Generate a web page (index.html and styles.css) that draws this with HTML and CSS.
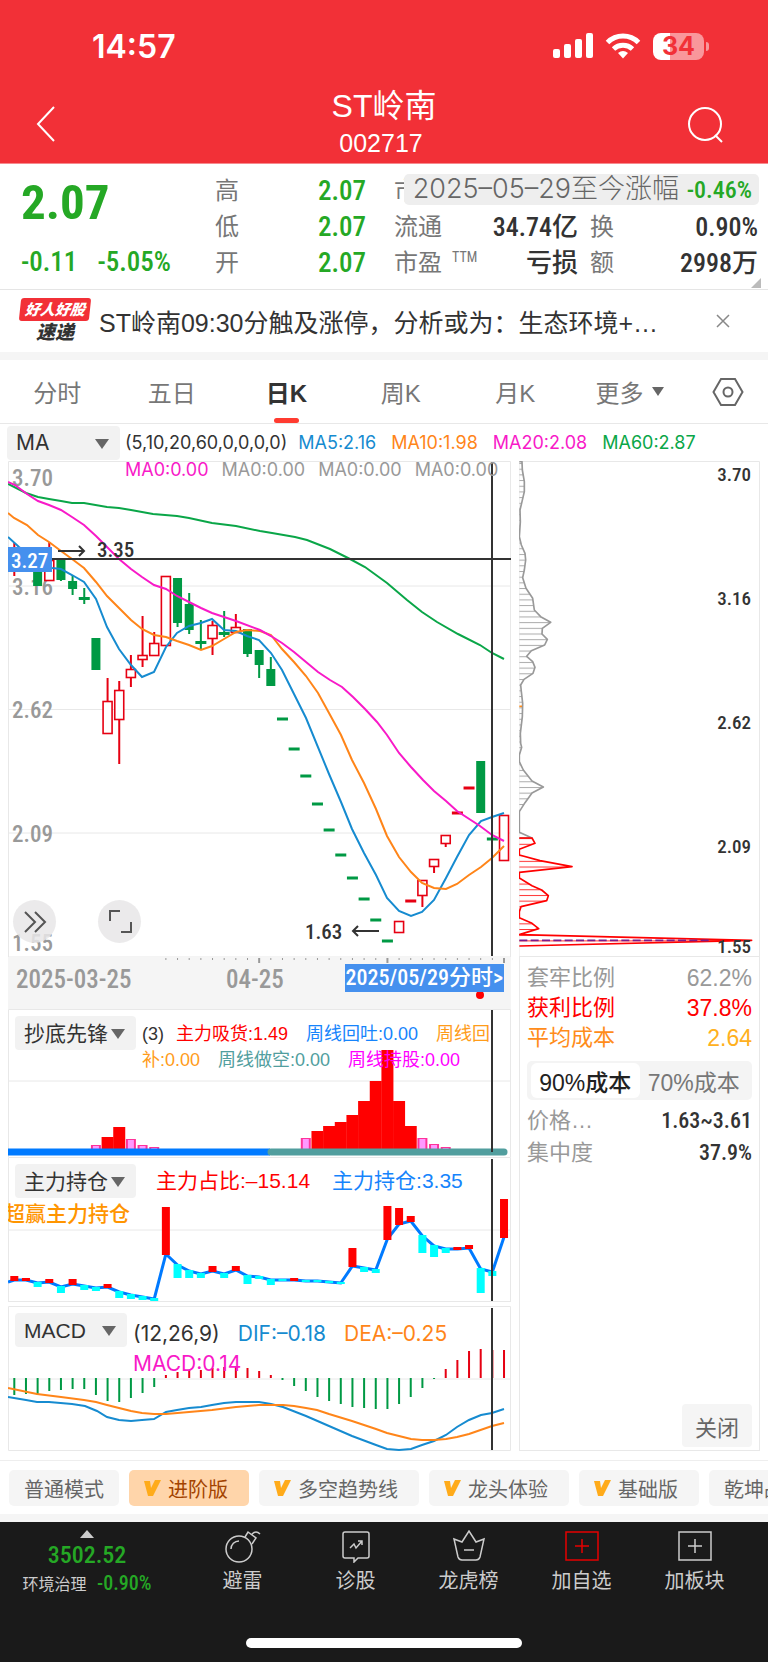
FILE: index.html
```html
<!DOCTYPE html>
<html lang="zh-CN">
<head>
	<meta charset="UTF-8">
	<meta name="viewport" content="width=device-width, initial-scale=1">
	<title>ST岭南 002717</title>
	<link rel="stylesheet" href="styles.css">
</head>
<body>

<header class="top">
	<div class="statusbar">
		<span class="clock">14:57</span>
		<div class="status-icons">
			<svg width="40" height="26" viewBox="0 0 40 26" fill="#fff"><rect x="0" y="16" width="7" height="9" rx="2"/><rect x="11" y="11" width="7" height="14" rx="2"/><rect x="22" y="6" width="7" height="19" rx="2"/><rect x="33" y="0" width="7" height="25" rx="2"/></svg>
			<svg width="36" height="26" viewBox="0 0 36 26" fill="none" stroke="#fff" stroke-width="5"><path d="M2.500 9.500a22 22 0 0 1 31 0M8.500 16a14 14 0 0 1 19 0"/><path d="M18 25.500l-5-5.500q5-4 10 0z" fill="#fff" stroke="none"/></svg>
			<div class="battery"><span>34</span></div>
		</div>
	</div>
	<div class="titlebar">
		<button class="icon-btn" aria-label="返回"><svg width="20" height="36" viewBox="0 0 20 36" fill="none" stroke="#fff" stroke-width="2"><path d="M18 1L2 18l16 17"/></svg></button>
		<div class="title">
			<h1>ST岭南</h1>
			<p>002717</p>
		</div>
		<button class="icon-btn" aria-label="搜索"><svg width="37" height="37" viewBox="0 0 37 37" fill="none" stroke="#fff" stroke-width="2"><circle cx="18" cy="18" r="16"/><path d="M28 29l7 7"/></svg></button>
	</div>
</header>

<section class="quote">
	<div class="price">
		<strong>2.07</strong>
		<p><span>-0.11</span><span>-5.05%</span></p>
	</div>
	<dl class="c1">
		<div><dt>高</dt><dd class="down">2.07</dd></div>
		<div><dt>低</dt><dd class="down">2.07</dd></div>
		<div><dt>开</dt><dd class="down">2.07</dd></div>
	</dl>
	<dl class="c2">
		<div><dt>市值</dt><dd></dd></div>
		<div><dt>流通</dt><dd>34.74亿</dd></div>
		<div><dt>市盈<sup>TTM</sup></dt><dd>亏损</dd></div>
	</dl>
	<dl class="c3">
		<div><dt></dt><dd></dd></div>
		<div><dt>换</dt><dd>0.90%</dd></div>
		<div><dt>额</dt><dd>2998万</dd></div>
	</dl>
	<div class="range-tip">2025–05–29至今涨幅 <b>-0.46%</b></div>
</section>

<section class="news">
	<div class="news-logo"><b>好人好股</b><i>速递</i></div>
	<a href="#">ST岭南09:30分触及涨停，分析或为：生态环境+…</a>
	<button class="icon-btn" aria-label="关闭"><svg width="14" height="14" viewBox="0 0 14 14" stroke="#888" stroke-width="1.500"><path d="M1 1l12 12M13 1L1 13"/></svg></button>
</section>

<nav class="tabs">
	<button>分时</button>
	<button>五日</button>
	<button class="active">日K</button>
	<button>周K</button>
	<button>月K</button>
	<button>更多<i class="tri"></i></button>
	<button aria-label="设置"><svg width="32" height="30" viewBox="0 0 32 30" fill="none" stroke="#666" stroke-width="2"><path d="M9 2h14l7.500 13L23 28H9L1.500 15z"/><circle cx="16" cy="15" r="4.500"/></svg></button>
</nav>

<div class="ma-row">
	<div class="picker wide"><select aria-label="主图指标"><option>MA</option></select></div>
	<p>(5,10,20,60,0,0,0,0)</p>
	<p class="blue">MA5:2.16</p>
	<p class="orange">MA10:1.98</p>
	<p class="pink">MA20:2.08</p>
	<p class="green">MA60:2.87</p>
</div>

<main class="board">
	<div class="left">

		<div class="panel">
			<svg viewBox="8 461 503 496" id="kline">
				<path class="frame" d="M8.500 957V461.500H510.500V957M8 586h503M8 709.500h503M8 833h503M8 957h503"/>
				<g class="axis-num">
					<text x="12" y="486">3.70</text>
					<text x="12" y="595">3.16</text>
					<text x="12" y="718">2.62</text>
					<text x="12" y="842">2.09</text>
					<text x="12" y="951">1.55</text>
				</g>
				<g id="candles"></g>
				<g class="line">
					<polyline class="s-green" points="8,484 26,493 38,497 49,499 61,501 72,503 84,503 107,507 119,508 131,510 153,514 177,516 189,518 212,523 236,526 260,531 272,533 295,537 307,540 330,549 350,559 365,567 387,583 407,600 422,612 437,622 458,634 480,645 492,653 504,659"/>
					<polyline class="s-blue" points="8,537 19,547 35,560 52,568 61,569 72,575 84,582 96,599 107,627 119,649 131,665 142,677 154,672 166,647 177,633 189,626 201,623 212,619 224,630 236,631 247,636 259,640 271,653 282,670 294,694 306,718 329,774 341,802 352,829 364,853 376,875 387,898 399,911 411,916 422,912 434,900 446,878 457,857 469,835 481,821 492,817 504,813"/>
					<polyline class="s-orange" points="8,513 14,518 27,525 38,535 49,542 61,551 72,559 84,568 96,582 107,596 119,608 131,620 142,629 154,635 166,637 177,641 189,645 201,650 212,646 224,639 236,632 247,630 260,631 271,635 282,649 294,662 306,676 318,693 329,713 341,735 352,760 364,783 376,809 387,836 399,857 411,872 422,883 434,888 446,889 457,884 469,875 481,867 492,858 504,846"/>
					<polyline class="s-pink" points="8,482 15,485 27,494 38,501 49,505 61,510 72,517 84,525 96,536 107,547 119,559 131,569 142,577 154,585 166,589 177,596 189,602 201,608 212,613 224,617 236,621 260,630 271,636 282,643 294,652 306,662 318,672 330,680 342,687 353,697 365,709 377,722 387,735 399,753 411,767 423,780 434,791 446,801 457,811 480,826 492,835 504,841"/>
				</g>
				<path class="cross" d="M8 559h503M492 462v494"/>
				<path class="arrow" d="M58 551h26m-5-5l5 5-5 5M379 931h-26m5-5l-5 5 5 5"/>
				<g class="mark">
					<text x="97" y="557">3.35</text>
					<text x="305" y="939">1.63</text>
				</g>
				<rect x="8" y="547" width="44" height="25" fill="#4590ee"/>
				<text class="tag-num" x="11" y="568">3.27</text>
			</svg>
			<div class="ma-zero"><span class="pink">MA0:0.00</span><span>MA0:0.00</span><span>MA0:0.00</span><span>MA0:0.00</span></div>
			<div class="tools">
				<button aria-label="展开"><svg width="24" height="24" viewBox="0 0 24 24" fill="none" stroke="#555" stroke-width="2"><path d="M2 2l10 10L2 22M12 2l10 10-10 10"/></svg></button>
				<button aria-label="全屏"><svg width="24" height="24" viewBox="0 0 24 24" fill="none" stroke="#555" stroke-width="2"><path d="M2 11V1h10M13 22h10V12"/></svg></button>
			</div>
		</div>

		<div class="panel dates">
			<svg viewBox="8 957 503 52">
				<g id="ticks" stroke="#999" stroke-width="1"></g>
				<g class="axis-num date-num">
					<text x="16" y="988">2025-03-25</text>
					<text x="226" y="988">04-25</text>
				</g>
				<circle cx="480" cy="995" r="4" fill="red"/>
			</svg>
			<button class="date-tag">2025/05/29分时&gt;</button>
		</div>

		<div class="panel">
			<svg viewBox="8 1009 503 148">
				<path class="frame" d="M8.500 1157V1009.500H510.500V1157M8 1081h503"/>
				<g id="absorb"></g>
				<path d="M8 1152h262" stroke="#007aff" stroke-width="7"/>
				<path d="M271 1152h233" stroke="#519e9e" stroke-width="7" stroke-linecap="round"/>
				<path class="cross" d="M492 1010v142"/>
			</svg>
			<div class="legend">
				<div class="picker"><select aria-label="副图指标一"><option>抄底先锋</option></select></div>
				<p class="small"><span class="arg">(3)</span><span class="red">主力吸货:1.49</span><span class="azure">周线回吐:0.00</span><span class="amber">周线回补:0.00</span><span class="teal">周线做空:0.00</span><span class="fuchsia">周线持股:0.00</span></p>
			</div>
		</div>

		<div class="panel">
			<svg viewBox="8 1157 503 149">
				<path class="frame" d="M8.500 1302V1157.500H510.500V1302M8 1230h503M8 1301.500h503"/>
				<polyline id="holdline" fill="none" stroke="#007aff" stroke-width="3"/>
				<g id="hold"></g>
				<path class="cross" d="M492 1159v142"/>
			</svg>
			<div class="legend">
				<div class="picker"><select aria-label="副图指标二"><option>主力持仓</option></select></div>
				<p class="gap"><span class="red">主力占比:–15.14</span><span class="azure">主力持仓:3.35</span></p>
			</div>
			<p class="watermark">超赢主力持仓</p>
		</div>

		<div class="panel">
			<svg viewBox="8 1306 503 145">
				<path class="frame" d="M8.500 1450.500V1306.500H510.500V1450.500zM8 1379h503"/>
				<g id="macd"></g>
				<g class="line">
					<polyline class="s-blue" points="8,1397 26,1400 37,1402 49,1402 72,1404 85,1406 97,1411 107,1417 119,1420 131,1421 142,1420 154,1419 166,1412 177,1410 189,1408 201,1407 212,1405 224,1403 236,1402 247,1402 259,1402 271,1404 283,1407 306,1416 329,1426 352,1436 376,1445 387,1449 399,1450 411,1449 422,1445 434,1441 446,1435 457,1427 469,1420 481,1415 492,1413 504,1409"/>
					<polyline class="s-orange" points="8,1388 37,1394 61,1397 84,1400 96,1402 107,1405 119,1408 131,1411 142,1413 154,1414 166,1414 189,1412 212,1410 236,1407 259,1405 283,1405 294,1406 306,1408 317,1410 329,1414 352,1421 376,1429 387,1433 399,1436 411,1439 422,1440 434,1440 446,1439 457,1437 469,1434 492,1426 504,1423"/>
				</g>
				<path class="cross" d="M492 1308v142"/>
			</svg>
			<div class="legend">
				<div class="picker short"><select aria-label="副图指标三"><option>MACD</option></select></div>
				<p class="macd"><span>(12,26,9)</span><span class="blue">DIF:–0.18</span><span class="orange">DEA:–0.25</span><span class="pink">MACD:0.14</span></p>
			</div>
		</div>
	</div>

	<div class="right">
		<svg viewBox="519 461 241 496">
			<defs>
				<!-- one stripe per price step -->
				<pattern id="stripeG" width="20" height="17.050" y="7" patternUnits="userSpaceOnUse"><rect width="20" height="3" fill="#aaa"/></pattern>
				<pattern id="stripeR" width="20" height="17.050" y="7" patternUnits="userSpaceOnUse"><rect width="20" height="3" fill="#ff3030"/></pattern>
			</defs>
			<path class="frame" d="M519.500 461.500H759.500V957M519 461v496M519 956.500h241"/>
			<g transform="translate(510 455) scale(.333333)" stroke-width="5" stroke-linejoin="round">
				<path fill="url(#stripeG)" stroke="#999" d="M28 20H36L37 45 43 80 43 110 36 140 30 165 31 200 28 245 34 270 45 295 47 315 43 345 38 368 48 400 68 430 73 465 92 485 122 502 97 520 96 537 112 553 104 570 64 587 50 604 68 620 75 637 69 655 42 673 32 690 34 710 38 745 37 785 31 835 32 865 35 877 28 900 28 920 40 945 66 978 100 996 66 1014 45 1043 28 1070V1132L66 1149H28"/>
				<path fill="url(#stripeR)" stroke="red" d="M28 1149H66L75 1165 28 1183V1200L90 1217 186 1235 28 1252V1269L66 1292 95 1305 115 1322 110 1337 33 1355 28 1370V1388L66 1405 86 1421 28 1439 725 1456 28 1473"/>
				<path stroke="#7b1b8c" stroke-dasharray="24 10" d="M28 1456H600"/>
				<path stroke="#ff8c1a" d="M28 754h8"/>
			</g>
			<g class="side-num">
				<text x="751" y="481">3.70</text>
				<text x="751" y="605">3.16</text>
				<text x="751" y="729">2.62</text>
				<text x="751" y="853">2.09</text>
				<text x="751" y="953">1.55</text>
			</g>
		</svg>
		<div class="info">
			<p class="gray">套牢比例<span>62.2%</span></p>
			<p class="red">获利比例<span>37.8%</span></p>
			<p class="cost">平均成本<span>2.64</span></p>
			<div class="seg">
				<button class="active">90%成本</button><button>70%成本</button>
			</div>
			<p class="gray">价格…<b>1.63~3.61</b></p>
			<p class="gray">集中度<b>37.9%</b></p>
			<button class="close">关闭</button>
		</div>
	</div>
</main>

<nav class="modes">
	<button>普通模式</button>
	<button class="v active"><svg class="vip" viewBox="0 0 18 16"><path d="M0 1h6l1 7 4-8h6L9 16H4z"/></svg>进阶版</button>
	<button class="v"><svg class="vip" viewBox="0 0 18 16"><path d="M0 1h6l1 7 4-8h6L9 16H4z"/></svg>多空趋势线</button>
	<button class="v"><svg class="vip" viewBox="0 0 18 16"><path d="M0 1h6l1 7 4-8h6L9 16H4z"/></svg>龙头体验</button>
	<button class="v"><svg class="vip" viewBox="0 0 18 16"><path d="M0 1h6l1 7 4-8h6L9 16H4z"/></svg>基础版</button>
	<button>乾坤战法</button>
</nav>

<footer class="bottom">
	<div class="actions">
		<a href="#" class="index">
			<i class="up"></i>
			<strong>3502.52</strong>
			<span>环境治理 <b>-0.90%</b></span>
		</a>
		<a href="#"><svg width="36" height="33" viewBox="0 0 36 33"><circle cx="14" cy="19" r="13"/><path d="M6 19a8 8 0 0 1 8-8M20 7l3-5 8 6-4 6M27 4q4-4 8 0"/></svg>避雷</a>
		<a href="#"><svg width="36" height="33" viewBox="0 0 36 33"><path d="M7 2h22q2 0 2 2v22q0 2-2 2h-9l-4 4v-4H7q-2 0-2-2V4q0-2 2-2zM12 18l4-4 2 4 6-7M20 11h4v4"/></svg>诊股</a>
		<a href="#"><svg width="36" height="33" viewBox="0 0 36 33"><path d="M3 9l8 3 7-11 7 11 8-3-4 18q-1 3-4 3H11q-3 0-4-3zM13 20h10"/></svg>龙虎榜</a>
		<a href="#"><svg class="hot" width="36" height="33" viewBox="0 0 36 33"><path d="M2 2h32v28H2zM18 9v14M11 16h14"/></svg>加自选</a>
		<a href="#"><svg width="36" height="33" viewBox="0 0 36 33"><path d="M2 2h32v28H2zM18 9v14M11 16h14"/></svg>加板块</a>
	</div>
	<div class="home"></div>
</footer>

<script src="charts.js"></script>
</body>
</html>
```

FILE: styles.css
```css
* {
	box-sizing: border-box;
}

body, h1, p, dl, dd {
	margin: 0;
}

body {
	background: #fff;
	color: #333;
	font-family: "Liberation Sans", "Noto Sans CJK SC", sans-serif;
	font-size: 24px;
	overflow-x: hidden;
}

button, select {
	font: inherit;
	color: inherit;
	border: 0;
	padding: 0;
	background: none;
}

a {
	color: inherit;
	text-decoration: none;
}

svg {
	display: block;
}

/* colours */

.blue { color: #168bd0; }
.orange { color: #ff8519; }
.pink { color: #f81ac8; }
.green { color: #0aa648; }
.red { color: #f00; }
.azure { color: #1684fc; }
.amber { color: #ff9c1a; }
.teal { color: #519e9e; }
.fuchsia { color: #f0f; }
.gray { color: #999; }

/* header */

.top {
	height: 164px;
	background: #f23037;
	border-bottom: 1px solid #f78a8e;
	color: #fff;
}

.statusbar {
	display: flex;
	justify-content: space-between;
	align-items: center;
	height: 87px;
	padding: 5px 59px 0 92px;
}

.clock {
	font: 600 32px Inter, sans-serif;
}

.status-icons {
	display: flex;
	align-items: center;
	gap: 12px;
}

.battery {
	position: relative;
	width: 51px;
	height: 27px;
	margin-right: 5px;
	border-radius: 8px;
	background: linear-gradient(90deg, #fff 34%, #f9979b 34%);
	color: #f23037;
	font: 700 25px/27px Inter, sans-serif;
	text-align: center;
}

.battery::after {
	content: "";
	position: absolute;
	right: -5px;
	top: 9px;
	width: 3px;
	height: 9px;
	border-radius: 0 4px 4px 0;
	background: #f9979b;
}

.titlebar {
	display: grid;
	grid-template-columns: 1fr auto 1fr;
	align-items: center;
	padding: 0 44px 0 36px;
}

.icon-btn {
	display: flex;
}

.title + .icon-btn {
	justify-self: end;
}

.title {
	padding-left: 8px;
	text-align: center;
}

.title h1 {
	font-size: 32px;
	font-weight: 400;
	line-height: 38px;
}

.title p {
	padding-right: 6px;
	font-size: 25px;
	line-height: 36px;
}

/* quote */

.quote {
	position: relative;
	display: flex;
	height: 126px;
	padding: 9px 10px 0 21px;
	border-bottom: 1px solid #e5e5e5;
	font-family: "Roboto Condensed", Roboto, "Noto Sans CJK SC", sans-serif;
}

.quote::after {
	content: "";
	position: absolute;
	right: 7px;
	bottom: 1px;
	border: 5px solid;
	border-color: transparent #bbb #bbb transparent;
}

.price {
	width: 194px;
	color: #25a825;
	font-weight: 500;
}

.price strong {
	display: block;
	font-size: 49px;
	font-weight: 700;
	line-height: 60px;
}

.price p {
	display: flex;
	gap: 20px;
	padding-top: 11px;
	font-size: 27px;
	line-height: 36px;
}

.quote dl > div {
	display: flex;
	justify-content: space-between;
	height: 36px;
	line-height: 36px;
}

.quote dt {
	color: #777;
	font-size: 24px;
}

.quote dd {
	font-weight: 500;
	font-size: 26px;
	white-space: nowrap;
}

.quote dd.down {
	color: #25a825;
	font-size: 27px;
}

.quote sup {
	margin-left: 10px;
	font-size: 14px;
	line-height: 1;
}

.c1 {
	width: 151px;
	margin-right: 28px;
}

.c2 {
	width: 184px;
	margin-right: 12px;
}

.c3 {
	flex: 1;
}

.range-tip {
	position: absolute;
	right: 9px;
	top: 10px;
	padding: 0 7px 0 9px;
	border-radius: 5px;
	background: #eee;
	color: #666;
	font: 300 27px/30px Inter, "Noto Sans CJK SC", sans-serif;
	white-space: nowrap;
}

.range-tip b {
	color: #25a825;
	font: 500 24px/30px "Roboto Condensed", Roboto, sans-serif;
}

/* news */

.news {
	display: flex;
	align-items: center;
	height: 70px;
	padding: 0 38px 0 20px;
	border-bottom: 8px solid #f5f5f5;
}

.news a {
	flex: 1;
	margin-left: 9px;
	font-size: 25px;
	white-space: nowrap;
}

.news-logo {
	width: 70px;
	font-style: italic;
	font-weight: 900;
	text-align: center;
}

.news-logo b {
	display: block;
	border-radius: 3px;
	background: #f23037;
	color: #fff;
	font-size: 15px;
	line-height: 23px;
	transform: skewX(-6deg);
}

.news-logo i {
	display: block;
	font-size: 19px;
	line-height: 24px;
}

/* tabs */

.tabs {
	display: grid;
	grid-template-columns: repeat(6, 17fr) 12fr;
	height: 64px;
	border-bottom: 1px solid #e8e8e8;
}

.tabs button {
	position: relative;
	display: flex;
	align-items: center;
	justify-content: center;
	color: #777;
}

.tabs .active {
	color: #333;
	font-weight: 700;
}

.tabs .active::after {
	content: "";
	position: absolute;
	bottom: 0;
	width: 25px;
	height: 5px;
	border-radius: 3px;
	background: #ff3b30;
}

.tri {
	margin-left: 9px;
	border: 6px solid transparent;
	border-top: 9px solid #666;
	border-bottom: 0;
}

/* indicator drop-downs */

.picker {
	position: relative;
	flex: none;
	width: 121px;
	height: 34px;
	border-radius: 4px;
	background: #f2f2f2;
}

.picker select {
	width: 100%;
	height: 34px;
	padding-left: 9px;
	appearance: none;
	font-size: 21px;
	color: #333;
}

.picker::after {
	content: "";
	position: absolute;
	right: 11px;
	top: 13px;
	border: 7px solid transparent;
	border-top: 10px solid #666;
	border-bottom: 0;
	pointer-events: none;
}

.picker.wide {
	width: 113px;
	margin-right: 5px;
}

.picker.short {
	width: 112px;
}

.ma-row {
	display: flex;
	align-items: center;
	height: 37px;
	padding-left: 7px;
	font: 18px Inter, sans-serif;
}

.ma-row p + p {
	margin-left: 15px;
}

.ma-row p + .blue {
	margin-left: 11px;
}

/* charts */

.board {
	display: grid;
	grid-template-columns: 503fr 241fr;
	gap: 8px;
	padding: 0 8px;
}

.panel {
	display: grid;
	overflow: hidden;
}

.panel > * {
	grid-area: 1 / 1;
	width: 100%;
	min-width: 0;
}

.frame {
	fill: none;
	stroke: #e8e8e8;
}

.cross {
	fill: none;
	stroke: #333;
	stroke-width: 2;
}

.arrow {
	fill: none;
	stroke: #333;
	stroke-width: 2;
}

.line {
	fill: none;
	stroke-width: 2;
}

.s-blue { stroke: #168bd0; }
.s-orange { stroke: #ff8519; }
.s-pink { stroke: #f81ac8; }
.s-green { stroke: #0aa648; }

.panel text,
.side-num {
	font-family: "Roboto Condensed", Roboto, sans-serif;
	font-weight: 500;
}

.axis-num {
	fill: #999;
	font-size: 23px;
}

.date-num {
	font-size: 25px;
}

.mark {
	fill: #333;
	font-size: 21px;
}

.tag-num {
	fill: #fff;
	font-size: 21px;
}

.side-num {
	fill: #333;
	font-size: 19px;
	text-anchor: end;
}

.ma-zero {
	display: flex;
	gap: 13px;
	padding: 1px 0 0 117px;
	color: #999;
	font: 18px/16px Inter, sans-serif;
}

.tools {
	display: flex;
	align-items: end;
	gap: 42px;
	padding: 0 0 14px 5px;
}

.tools button {
	display: flex;
	align-items: center;
	justify-content: center;
	width: 43px;
	height: 43px;
	border-radius: 50%;
	background: rgba(232, 230, 232, .85);
}

.dates {
	background: #f5f5f5;
}

.panel > .date-tag {
	justify-self: end;
	width: auto;
	height: 28px;
	margin: 7px 7px 0 0;
	padding: 0 1px;
	background: #4590ee;
	color: #fff;
	font: 500 22px/28px "Roboto Condensed", Roboto, "Noto Sans CJK SC", sans-serif;
}

.legend {
	display: flex;
	align-items: start;
	padding: 7px 0 0 7px;
}

.legend p {
	flex: 1;
}

.legend .small {
	padding: 5px 14px 0 6px;
	font-size: 18px;
	line-height: 26px;
}

.legend .small span + span {
	margin-left: 18px;
}

.legend .small .arg + span {
	margin-left: 12px;
}

.legend .gap {
	display: flex;
	gap: 22px;
	padding-left: 20px;
	font-size: 21px;
	line-height: 34px;
}

.legend .macd {
	display: flex;
	flex-wrap: wrap;
	column-gap: 18px;
	padding: 6px 20px 0 6px;
	font: 21px/30px Inter, sans-serif;
}

.watermark {
	padding-top: 43px;
	text-indent: -4px;
	color: #ff9500;
	font-size: 21px;
	font-weight: 500;
	line-height: 28px;
}

/* cost panel */

.right {
	display: flex;
	flex-direction: column;
}

.right svg {
	width: 100%;
}

.info {
	display: flex;
	flex: 1;
	flex-direction: column;
	padding: 6px 7px 3px;
	border: 1px solid #e8e8e8;
	border-top: 0;
	font-size: 22px;
}

.info p {
	display: flex;
	justify-content: space-between;
	line-height: 30px;
}

.info span {
	font-size: 23px;
}

.info b {
	color: #333;
	font: 500 22px/30px "Roboto Condensed", Roboto, sans-serif;
}

.seg ~ p {
	padding-bottom: 2px;
}

.cost {
	color: #ff8c1a;
}

.cost span {
	color: #ffb020;
}

.seg {
	display: flex;
	margin: 8px 0 6px;
	padding: 2px 4px;
	border-radius: 5px;
	background: #f4f4f4;
	color: #777;
	font-size: 23px;
}

.seg button {
	flex: 1;
	height: 35px;
	border-radius: 6px;
	white-space: nowrap;
}

.seg .active {
	background: #fff;
	color: #222;
	font-weight: 500;
}

.close {
	align-self: end;
	width: 70px;
	height: 43px;
	margin-top: auto;
	border-radius: 4px;
	background: #f5f5f5;
	color: #666;
}

/* mode chips */

.modes {
	display: flex;
	gap: 10px;
	height: 62px;
	margin-top: 9px;
	padding: 9px 9px 0;
	border-top: 1px solid #eee;
	border-bottom: 8px solid #f5f5f5;
	overflow: hidden;
}

.modes button {
	display: flex;
	flex: none;
	align-items: center;
	height: 36px;
	padding: 0 15px;
	border-radius: 5px;
	background: #f5f5f5;
	color: #666;
	font-size: 20px;
	white-space: nowrap;
}

.modes .v {
	padding-right: 21px;
}

.modes .active {
	background: #ffd5aa;
	color: #a34300;
}

.vip {
	width: 18px;
	height: 16px;
	margin-right: 6px;
	fill: #ffab1a;
}

/* bottom bar */

.bottom {
	display: flex;
	flex-direction: column;
	justify-content: space-between;
	align-items: center;
	height: 140px;
	padding-bottom: 14px;
	background: #1a1a1a;
	color: #ccc;
}

.actions {
	display: grid;
	grid-template-columns: 186fr repeat(5, 113fr) 17fr;
	width: 100%;
	padding: 8px 0 0;
}

.actions a {
	display: flex;
	flex-direction: column;
	align-items: center;
	font-size: 20px;
	line-height: 36px;
	white-space: nowrap;
}

.actions .index {
	padding-right: 12px;
}

.actions svg {
	fill: none;
	stroke: #ccc;
	stroke-width: 1.5;
}

.actions svg.hot {
	stroke: #e60000;
}

.up {
	border: 7px solid transparent;
	border-bottom: 8px solid #ccc;
	border-top: 0;
}

.index strong {
	color: #25a825;
	font: 500 24px/34px "Roboto Condensed", Roboto, sans-serif;
}

.index span {
	font-size: 16px;
	line-height: 22px;
}

.index b {
	margin-left: 6px;
	color: #25a825;
	font: 500 20px/22px "Roboto Condensed", Roboto, sans-serif;
}

.home {
	width: 36%;
	height: 10px;
	border-radius: 5px;
	background: #fff;
}
```

FILE: charts.js
```js
var RED = '#e60012', GREEN = '#009944';

function draw(id, tag, attrs) {
	var el = document.createElementNS('http://www.w3.org/2000/svg', tag);
	for (var k in attrs) el.setAttribute(k, attrs[k]);
	document.getElementById(id).appendChild(el);
}

// one trading day per step
function dayX(i) {
	return 14.3 + 11.66 * i;
}

function rect(id, x, y, w, h, fill) {
	draw(id, 'rect', { x: x, y: y, width: w, height: h, fill: fill });
}

// [day, r/g, body top, body bottom, wick top, wick bottom]
var candles = [
	[0, 'r', 550, 570, 543, 576], [1, 'g', 552, 568, 552, 568], [2, 'g', 556, 586, 556, 586],
	[3, 'r', 560, 581, 542, 560], [4, 'g', 560, 580, 560, 581], [5, 'g', 581, 589, 575, 595],
	[6, 'g', 597, 600, 588, 604], [7, 'g', 638, 670, 638, 670], [8, 'r', 701, 734, 678, 734],
	[9, 'r', 690, 720, 681, 764], [10, 'r', 669, 678, 655, 687], [11, 'r', 655, 660, 616, 667],
	[12, 'r', 643, 656, 632, 656], [13, 'r', 576, 646, 576, 646], [14, 'g', 578, 623, 578, 627],
	[15, 'g', 604, 630, 593, 634], [16, 'g', 641, 644, 620, 650], [17, 'r', 625, 639, 621, 655],
	[18, 'g', 632, 635, 611, 637], [19, 'r', 627, 633, 614, 633], [20, 'g', 629, 654, 629, 657],
	[21, 'g', 650, 665, 650, 678], [22, 'g', 669, 686, 657, 686], [33, 'r', 921, 933, 921, 933],
	[35, 'r', 880, 896, 880, 907], [36, 'r', 859, 867, 859, 873], [37, 'r', 835, 844, 835, 847],
	[40, 'g', 761, 813, 761, 813], [42, 'r', 815, 861, 815, 861]
];

candles.forEach(function (c) {
	var x = dayX(c[0]), col = c[1] == 'r' ? RED : GREEN;
	draw('candles', 'path', { d: 'M' + x + ' ' + c[4] + 'V' + c[2] + 'M' + x + ' ' + c[3] + 'V' + c[5], stroke: col, 'stroke-width': 2 });
	if (c[1] == 'r') {
		draw('candles', 'rect', { x: x - 4.5, y: c[2] + 0.5, width: 9, height: c[3] - c[2] - 1, fill: '#fff', stroke: col, 'stroke-width': 1.6 });
	} else {
		var w = c[3] - c[2] < 4 ? 11 : 9;
		rect('candles', x - w / 2, c[2], w, c[3] - c[2], col);
	}
});

// limit days, open = close
[[23, 719], [24, 749], [25, 776], [26, 804], [27, 830], [28, 855], [29, 878], [30, 899], [31, 920], [32, 941], [41, 839]].forEach(function (d) {
	rect('candles', dayX(d[0]) - 5.5, d[1] - 1.5, 11, 3, GREEN);
});
[[34, 901], [38, 813], [39, 788]].forEach(function (d) {
	rect('candles', dayX(d[0]) - 5.5, d[1] - 1.5, 11, 3, RED);
});

for (var i = 13; i < 43; i++) {
	var big = i == 21 || i == 32 || i == 42;
	draw('ticks', 'path', { d: 'M' + dayX(i) + ' 958v' + (big ? 5 : 2), 'stroke-width': big ? 2 : 1 });
}

// bars of the first sub chart, [day, top]
[[8, 1137], [9, 1127], [26, 1131], [27, 1126], [28, 1122], [29, 1115], [30, 1101], [31, 1081], [32, 1050], [33, 1101], [34, 1126]].forEach(function (b) {
	rect('absorb', dayX(b[0]) - 6, b[1], 12, 1149 - b[1], '#f00');
});
[[7, 1145], [10, 1139], [11, 1145], [12, 1147], [25, 1138], [35, 1138], [36, 1144], [37, 1147]].forEach(function (b) {
	rect('absorb', dayX(b[0]) - 5, b[1], 10, 1149 - b[1], '#ff3399');
	rect('absorb', dayX(b[0]) - 3, b[1] + 1, 6, 1148 - b[1], '#ff99ff');
});

// position line and the bars hanging on it
var hold = [1280, 1280, 1283, 1282, 1287, 1284, 1286, 1288, 1287, 1292, 1295, 1297, 1299, 1254, 1265, 1271, 1274, 1271, 1274, 1270, 1276, 1277, 1280, 1280, 1280, 1281, 1281, 1282, 1283, 1266, 1268, 1270, 1239, 1224, 1221, 1236, 1246, 1249, 1249, 1248, 1269, 1272, 1237];
var holdBar = [-4, -2, 4, -3, 6, -5, 4, 3, -3, 6, 4, 3, 2, -47, 13, 7, 4, -5, 4, -4, 8, 2, 5, 1, -2, 1, 1, 1, 1, -18, 4, 3, -33, -16, -5, 17, 11, 4, -2, -3, 24, 4, -38];
var points = '8,1282';
hold.forEach(function (y, i) {
	var h = holdBar[i];
	points += ' ' + dayX(i) + ',' + y;
	rect('hold', dayX(i) - 4, h < 0 ? y + h : y - 1, 8, Math.abs(h) + 1, h < 0 ? '#f00' : '#0ff');
});
document.getElementById('holdline').setAttribute('points', points);

var macd = [17, 16, 17, 13, 12, 11, 11, 17, 23, 24, 20, 15, 9, -3, -6, -8, -8, -10, -11, -11, -10, -7, -3, 2, 8, 13, 19, 23, 26, 29, 30, 31, 31, 26, 19, 10, 1, -9, -18, -27, -29, -28, -28];
macd.forEach(function (h, i) {
	rect('macd', dayX(i) - 1, h < 0 ? 1378 + h : 1378, 2, Math.abs(h), h < 0 ? RED : GREEN);
});
```
